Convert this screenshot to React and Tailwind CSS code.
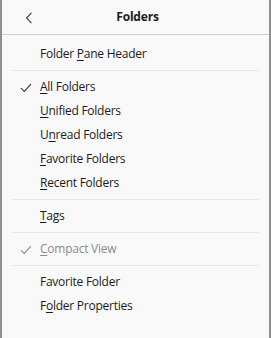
import React from "react";

function Check({ muted }) {
    return (
        <svg width="12" height="10" viewBox="0 0 12 10" className="absolute left-[18px] top-[8px]">
            <path d="M1 5.2 L4.2 8.4 L11 1.2" fill="none" stroke={muted ? "#8c8c8c" : "#3c3c3c"} strokeWidth="1.1" />
        </svg>
    );
}

function Item({ pre = "", u, post, checked, muted }) {
    return (
        <div className={"relative h-6 pl-[38px] flex items-center text-[12px] tracking-[-0.25px] " + (muted ? "text-[#8c8c8c]" : "text-[#1b1b1b]")}>
            {checked && <Check muted={muted} />}
            <span>
                {pre}
                <span className="underline underline-offset-2 decoration-1">{u}</span>
                {post}
            </span>
        </div>
    );
}

function Sep() {
    return <div className="mx-[10px] my-1 h-px bg-[#e6e6e6]" />;
}

export default function App() {
    return (
        <div className="w-[271px] h-[338px] bg-[#f9f9f9] border-l-2 border-r-2 border-[#8f8f8f] flex flex-col" style={{ fontFamily: '"Open Sans", "Noto Sans", sans-serif' }}>
            <div className="relative h-[35px] flex items-center justify-center border-b border-[#cfcfcf]">
                <svg width="8" height="12" viewBox="0 0 8 12" className="absolute left-[23px] top-[12px]">
                    <path d="M6.5 0.8 L1.5 6 L6.5 11.2" fill="none" stroke="#3c3c3c" strokeWidth="1.1" />
                </svg>
                <span className="text-[12px] tracking-[-0.2px] font-bold text-[#1b1b1b] pl-1">Folders</span>
            </div>
            <div className="pt-[7px]">
                <Item pre="Folder " u="P" post="ane Header" />
                <Sep />
                <Item u="A" post="ll Folders" checked />
                <Item u="U" post="nified Folders" />
                <Item pre="U" u="n" post="read Folders" />
                <Item u="F" post="avorite Folders" />
                <Item u="R" post="ecent Folders" />
                <Sep />
                <Item u="T" post="ags" />
                <Sep />
                <Item u="C" post="ompact View" checked muted />
                <Sep />
                <Item pre="Favorite Folder" u="" post="" />
                <Item pre="F" u="o" post="lder Properties" />
            </div>
        </div>
    );
}
